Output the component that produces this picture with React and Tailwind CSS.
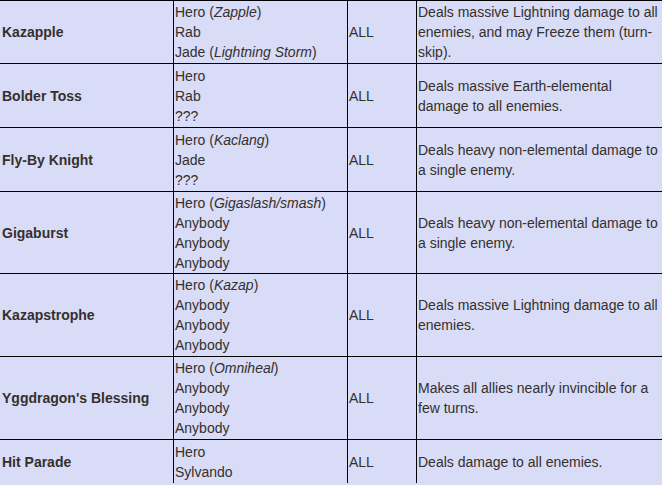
import React from "react";

const rows = [
  {
    name: "Kazapple",
    h: "h-[63px]",
    users: [["Hero", "Zapple"], ["Rab"], ["Jade", "Lightning Storm"]],
    desc: "Deals massive Lightning damage to all enemies, and may Freeze them (turn-skip).",
  },
  {
    name: "Bolder Toss",
    h: "h-[64px]",
    users: [["Hero"], ["Rab"], ["???"]],
    desc: "Deals massive Earth-elemental damage to all enemies.",
  },
  {
    name: "Fly-By Knight",
    h: "h-[64px]",
    users: [["Hero", "Kaclang"], ["Jade"], ["???"]],
    desc: "Deals heavy non-elemental damage to a single enemy.",
  },
  {
    name: "Gigaburst",
    h: "h-[82px]",
    users: [["Hero", "Gigaslash/smash"], ["Anybody"], ["Anybody"], ["Anybody"]],
    desc: "Deals heavy non-elemental damage to a single enemy.",
  },
  {
    name: "Kazapstrophe",
    h: "h-[83px]",
    users: [["Hero", "Kazap"], ["Anybody"], ["Anybody"], ["Anybody"]],
    desc: "Deals massive Lightning damage to all enemies.",
  },
  {
    name: "Yggdragon's Blessing",
    h: "h-[83px]",
    users: [["Hero", "Omniheal"], ["Anybody"], ["Anybody"], ["Anybody"]],
    desc: "Makes all allies nearly invincible for a few turns.",
  },
  {
    name: "Hit Parade",
    h: "h-[44px]",
    users: [["Hero"], ["Sylvando"]],
    desc: "Deals damage to all enemies.",
  },
];

export default function App() {
  return (
    <div
      className="w-[662px] h-[485px] overflow-hidden bg-[#d8dcf6] text-[#352f2d] text-[14px] leading-[20px]"
      style={{ fontFamily: '"Liberation Sans", Arial, sans-serif' }}
    >
      {rows.map((r, i) => (
        <div key={i} className={`flex border-t border-black ${r.h}`}>
          <div className="w-[173px] shrink-0 flex items-center pl-[2px] font-bold">
            {r.name}
          </div>
          <div className="w-[174px] shrink-0 border-l border-black flex flex-col justify-center pl-[1px]">
            {r.users.map((u, j) => (
              <div key={j}>
                {u[0]}
                {u[1] ? (
                  <>
                    {" ("}
                    <i>{u[1]}</i>
                    {")"}
                  </>
                ) : null}
              </div>
            ))}
          </div>
          <div className="w-[69px] shrink-0 border-l border-black flex items-center pl-[1px]">
            ALL
          </div>
          <div className="flex-1 border-l border-black flex items-center pl-[1px]">
            <div>{r.desc}</div>
          </div>
        </div>
      ))}
    </div>
  );
}
